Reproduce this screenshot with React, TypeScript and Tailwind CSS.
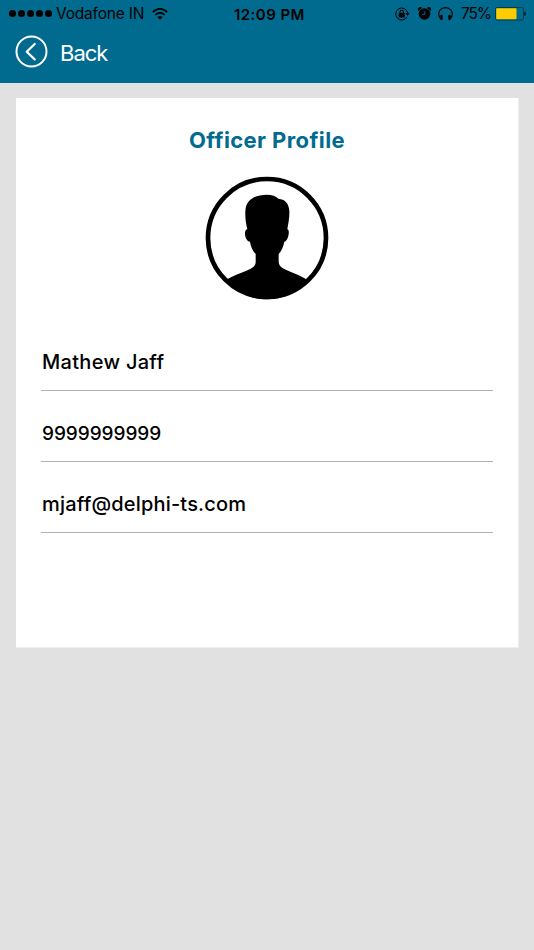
import type { ReactNode } from "react";

const profile = [
  { id: "name", value: "Mathew Jaff", className: "text-[20px] tracking-[0.3px]" },
  { id: "phone", value: "9999999999", className: "mt-[2px] text-[19px] tracking-[-0.05px]" },
  { id: "email", value: "mjaff@delphi-ts.com", className: "text-[20px] tracking-[0.18px]" },
];

function SignalDots() {
  return (
    <div className="flex gap-[2px]">
      {[0, 1, 2, 3, 4].map((dot) => (
        <span key={dot} className="size-[7px] rounded-full bg-black" />
      ))}
    </div>
  );
}

function WifiIcon() {
  return (
    <svg width="16" height="12" viewBox="0 0 16 12" fill="none" stroke="#000" strokeWidth="1.7">
      <path d="M.8 4.4C4.8-.2 11.2-.2 15.2 4.4" />
      <path d="M3.4 7c2.6-2.9 6.6-2.9 9.2 0" />
      <path d="M5.4 9.1c1.5-1.6 3.7-1.6 5.2 0L8 11.8Z" fill="#000" stroke="none" />
    </svg>
  );
}

function RotationLockIcon() {
  return (
    <svg width="15" height="14" viewBox="0 0 15 14" fill="none" stroke="#000">
      <path d="M12 9.8A6 6 0 1 1 12.6 6" strokeWidth="1" />
      <path d="M10.5 6h4.2l-2.1 2.7Z" fill="#000" stroke="none" />
      <rect x="3.7" y="6" width="6" height="4.4" rx=".6" fill="#000" stroke="none" />
      <path d="M5 6.2V5a1.7 1.7 0 0 1 3.4 0v1.2" strokeWidth="1.1" />
    </svg>
  );
}

function AlarmIcon() {
  return (
    <svg width="13" height="13" viewBox="0 0 13 13">
      <circle cx="6.5" cy="7" r="5.8" />
      <path d="M.4 4.1A2.2 2.2 0 0 1 4 .9ZM12.6 4.1A2.2 2.2 0 0 0 9 .9Z" />
      <path d="M6.9 4.2v3.2H4.3" fill="none" stroke="#006b8f" strokeWidth="1" />
    </svg>
  );
}

function HeadphonesIcon() {
  return (
    <svg width="15" height="14" viewBox="0 0 15 14">
      <path d="M2.4 11.3C.3 9.3.2 5.4 2 3.1 4.6-.1 10.4-.1 13 3.1c1.8 2.3 1.7 6.2-.4 8.2" fill="none" stroke="#000" strokeWidth="1.2" />
      <rect x="2.2" y="7.7" width="2.5" height="5.5" rx="1.1" />
      <rect x="10.3" y="7.7" width="2.5" height="5.5" rx="1.1" />
    </svg>
  );
}

function BatteryIcon() {
  return (
    <svg width="31" height="14" viewBox="0 0 31 14">
      <rect x=".5" y=".5" width="28" height="12.5" rx="1.8" fill="none" stroke="#003c50" />
      <rect x="1.2" y="1.3" width="20.3" height="11" rx=".7" fill="#ffcc00" />
      <path d="M29.3 4.4c2.2.8 2.2 3.9 0 4.7Z" fill="#001d27" />
    </svg>
  );
}

function StatusBar() {
  return (
    <div className="grid h-[27px] grid-cols-[234px_1fr_139px] items-center text-black">
      <div className="flex items-center pl-[9px]">
        <SignalDots />
        <span className="ml-1 w-[96px] whitespace-nowrap pt-px text-[15.5px] leading-none tracking-[-0.2px]">
          Vodafone IN
        </span>
        <WifiIcon />
      </div>
      <span className="whitespace-nowrap pt-px text-[15px] font-semibold leading-none tracking-[0.45px]">
        12:09 PM
      </span>
      <div className="flex items-center">
        <RotationLockIcon />
        <span className="ml-2 flex">
          <AlarmIcon />
        </span>
        <span className="ml-[7px] flex">
          <HeadphonesIcon />
        </span>
        <span className="ml-2 w-[34px] whitespace-nowrap pt-px text-[15.5px] leading-none tracking-[-1.1px]">75%</span>
        <BatteryIcon />
      </div>
    </div>
  );
}

function BackButton() {
  return (
    <button type="button" className="ml-[15px] flex h-[49px] items-center gap-3 text-white">
      <svg width="33" height="33" viewBox="0 0 33 33" fill="none" stroke="currentColor" strokeWidth="2">
        <circle cx="16.5" cy="16.5" r="15" />
        <path d="m19.7 9-8 7.7 8 7.7" strokeWidth="2.2" strokeLinecap="round" strokeLinejoin="round" />
      </svg>
      <span className="mt-[2px] text-[22px] leading-none tracking-[-1px]">Back</span>
    </button>
  );
}

function Avatar() {
  return (
    <svg className="mx-auto" width="124" height="124" viewBox="76 169 372 372">
      <circle cx="262" cy="355" r="177" fill="#fff" stroke="#000" strokeWidth="14" />
      <path d="M141 480C163 465 193 457 213 447C224 441 228 435 228 426V403C219 394 213 380 211 366C202 365 196 353 196 342C196 333 199 329 203 329C198 309 195 286 198 266C203 238 229 225 262 225C277 225 289 229 296 237C316 239 327 250 329 273C330 292 326 311 323 329C327 330 328 335 327 342C326 354 321 364 314 366C311 380 306 394 297 403V426C297 435 302 441 312 447C333 458 360 465 382 480C353 518 310 539 262 539C214 539 171 518 141 480Z" />
    </svg>
  );
}

function ProfileField({ children }: { children: ReactNode }) {
  return <div className="flex h-[71px] items-center border-b border-[#b2b2b2] pt-[13px] pl-px">{children}</div>;
}

export default function App() {
  return (
    <div className="min-h-screen bg-[#e1e1e1] font-[Inter,sans-serif]">
      <header className="h-[83px] bg-[#006b8f]">
        <StatusBar />
        <BackButton />
      </header>
      <main className="mr-[15px] ml-4 mt-[15px] h-[550px] border-r border-b border-[#efefef] bg-white pt-[29px]">
        <h1 className="text-center text-[22px] font-bold leading-[26px] tracking-[0.4px] text-[#006b8f]">
          Officer Profile
        </h1>
        <div className="mt-[23px]">
          <Avatar />
        </div>
        <div className="mx-[25px] mt-[20px] text-black">
          {profile.map((field) => (
            <ProfileField key={field.id}>
              <span className={`${field.className} whitespace-nowrap font-medium leading-none`}>{field.value}</span>
            </ProfileField>
          ))}
        </div>
      </main>
    </div>
  );
}
